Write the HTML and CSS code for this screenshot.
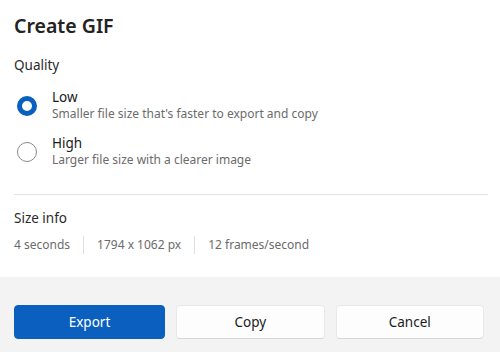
FILE: index.html
```html
<!DOCTYPE html>
<html>

<head>
  <title>Create GIF</title>
  <link rel="stylesheet" href="styles.css">
</head>

<body>
  <div class="dialog">
    <div class="content">
      <h2 class="title">Create GIF</h2>
      <div class="section-label">Quality</div>

      <label class="option">
        <span class="radio checked"></span>
        <span class="option-text">
          <span class="option-name">Low</span>
          <span class="option-desc">Smaller file size that's faster to export and copy</span>
        </span>
      </label>
      <label class="option">
        <span class="radio"></span>
        <span class="option-text">
          <span class="option-name">High</span>
          <span class="option-desc">Larger file size with a clearer image</span>
        </span>
      </label>

      <div class="divider"></div>

      <div class="section-label">Size info</div>
      <div class="info">
        <span>4 seconds</span>
        <span class="sep"></span>
        <span>1794 x 1062 px</span>
        <span class="sep"></span>
        <span>12 frames/second</span>
      </div>
    </div>

    <div class="footer">
      <button class="btn primary">Export</button>
      <button class="btn">Copy</button>
      <button class="btn">Cancel</button>
    </div>
  </div>
</body>

</html>
```

FILE: styles.css
```css
/* Create GIF dialog */
body {
  margin: 0;
  font-family: "Noto Sans", "Open Sans", sans-serif;
  color: #1b1b1b;
  background: #fff;
}

.dialog {
  width: 500px;
  height: 352px;
  display: flex;
  flex-direction: column;
}

.content {
  padding: 13px 12px 0 14px;
}

.title {
  margin: 0;
  font-size: 19.5px;
  font-weight: 600;
  line-height: 26px;
  color: #222;
}

.section-label {
  font-size: 13.5px;
  line-height: 18px;
  color: #2a2a2a;
  margin-top: 17px;
}

.option {
  display: flex;
  align-items: center;
  gap: 15px;
  margin-top: 15px;
}

.option + .option {
  margin-top: 13px;
}

.radio {
  width: 18px;
  height: 18px;
  border: 1px solid #8a8a8a;
  border-radius: 50%;
  margin-left: 3px;
  flex-shrink: 0;
}

.radio.checked {
  width: 10px;
  height: 10px;
  border: 5px solid #0a5fbf;
}

.option-text {
  display: flex;
  flex-direction: column;
}

.option-name {
  font-size: 13.5px;
  line-height: 17px;
}

.option-desc {
  font-size: 12px;
  line-height: 16px;
  color: #6b6b6b;
}

.divider {
  height: 1px;
  background: #e3e3e3;
  margin: 26px 0 0 0;
}

.divider + .section-label {
  margin-top: 14px;
}

.info {
  display: flex;
  align-items: center;
  gap: 13px;
  font-size: 12px;
  line-height: 16px;
  color: #6b6b6b;
  margin-top: 9px;
}

.sep {
  width: 1px;
  height: 18px;
  background: #e0e0e0;
}

.footer {
  margin-top: auto;
  height: 75px;
  box-sizing: border-box;
  background: #f3f3f3;
  padding: 28px 16px 0 14px;
  display: grid;
  grid-template-columns: 151px 1fr 1fr;
  gap: 11px;
  align-items: start;
}

.btn {
  height: 34px;
  border: 1px solid #e8e8e8;
  border-bottom-color: #d6d6d6;
  border-radius: 4px;
  background: #fdfdfd;
  font-family: inherit;
  font-size: 13.5px;
  color: #1b1b1b;
}

.btn.primary {
  background: #0a5fbf;
  border-color: #0a5fbf;
  color: #fff;
}
```
